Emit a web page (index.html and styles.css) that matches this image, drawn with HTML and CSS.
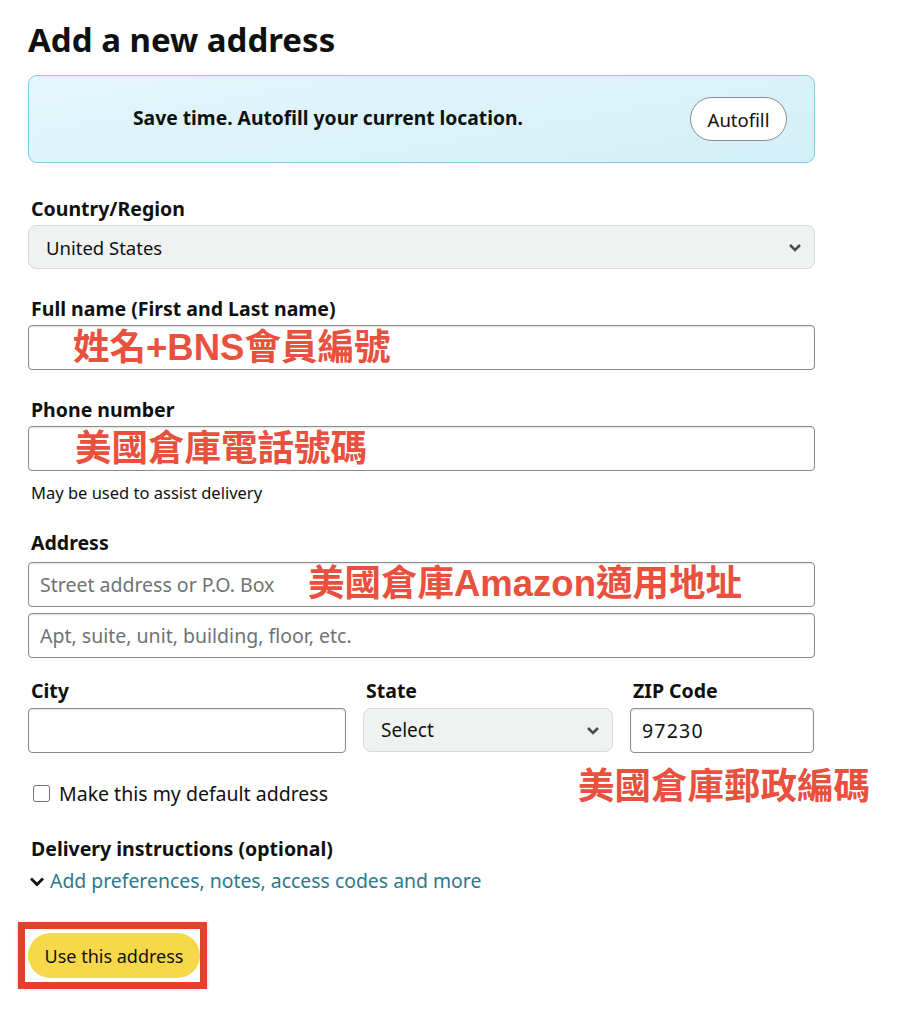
FILE: index.html
```html
<!DOCTYPE html>
<html>
<head>
<meta charset="UTF-8" />
<link rel="stylesheet" href="styles.css">
</head>
<body>
<div class="page">
  <h1 class="title">Add a new address</h1>

  <div class="autofill">
    <span class="autofill-text">Save time. Autofill your current location.</span>
    <span class="btn-autofill">Autofill</span>
  </div>

  <div class="field first">
    <div class="label">Country/Region</div>
    <div class="select">
      <span class="country">United States</span>
      <svg class="chev" width="14" height="9" viewBox="0 0 14 9"><polyline points="2,2 7,7 12,2" fill="none" stroke="#4a4d4d" stroke-width="2.6" /></svg>
    </div>
  </div>

  <div class="field">
    <div class="label">Full name (First and Last name)</div>
    <div class="input"><span class="note note-name">姓名+BNS會員編號</span></div>
  </div>

  <div class="field">
    <div class="label">Phone number</div>
    <div class="input"><span class="note note-phone">美國倉庫電話號碼</span></div>
    <div class="hint">May be used to assist delivery</div>
  </div>

  <div class="field addr">
    <div class="label">Address</div>
    <div class="input">
      <span class="placeholder street">Street address or P.O. Box</span>
      <span class="note note-addr">美國倉庫Amazon適用地址</span>
    </div>
    <div class="input second">
      <span class="placeholder">Apt, suite, unit, building, floor, etc.</span>
    </div>
  </div>

  <div class="row3">
    <div>
      <div class="label">City</div>
      <div class="input"></div>
    </div>
    <div>
      <div class="label">State</div>
      <div class="select">
        <span>Select</span>
        <svg class="chev" width="14" height="9" viewBox="0 0 14 9"><polyline points="2,2 7,7 12,2" fill="none" stroke="#4a4d4d" stroke-width="2.6" /></svg>
      </div>
    </div>
    <div>
      <div class="label">ZIP Code</div>
      <div class="input"><span class="value">97230</span></div>
    </div>
  </div>

  <div class="check-row">
    <label class="check"><span class="box"></span>Make this my default address</label>
    <span class="note note-zip">美國倉庫郵政編碼</span>
  </div>

  <div class="delivery">
    <div class="label">Delivery instructions (optional)</div>
    <div class="more">
      <svg width="16" height="11" viewBox="0 0 16 11"><polyline points="2,2.5 8,8.5 14,2.5" fill="none" stroke="#111" stroke-width="2.8" /></svg>
      <span>Add preferences, notes, access codes and more</span>
    </div>
  </div>

  <div class="mark">
    <span class="btn-use">Use this address</span>
  </div>
</div>
</body>
</html>
```

FILE: styles.css
```css
* {
  box-sizing: border-box;
}

body {
  margin: 0;
  background: #fff;
  color: #0f1111;
  font-family: "Noto Sans", "Liberation Sans", sans-serif;
  font-size: 19.5px;
}

div.page {
  width: 787px;
  margin-left: 28px;
}

h1.title {
  margin: 19px 0 0 0;
  font-size: 33px;
  line-height: 42px;
  font-weight: 700;
}

div.autofill {
  margin-top: 14px;
  height: 88px;
  display: flex;
  align-items: center;
  justify-content: space-between;
  padding: 0 27px 0 104px;
  border: 1px solid #7fcde0;
  border-radius: 9px;
  background: linear-gradient(170deg, #e4f7fc, #d3eff7);
}

span.autofill-text {
  font-weight: 700;
  font-size: 19.3px;
  margin-top: -4px;
}

span.btn-autofill {
  display: flex;
  align-items: center;
  justify-content: center;
  width: 97px;
  height: 44px;
  border: 1px solid #8a8d8f;
  border-radius: 22px;
  background: #fff;
  font-size: 18.5px;
}

div.label {
  font-weight: 700;
  line-height: 22px;
  height: 22px;
  margin-bottom: 5px;
  padding-left: 3px;
}

div.field {
  margin-top: 29px;
}

div.field.first {
  margin-top: 35px;
}

div.select {
  height: 44px;
  display: flex;
  align-items: center;
  justify-content: space-between;
  padding: 0 12px 0 17px;
  background: #f0f2f2;
  border: 1px solid #d5d9d9;
  border-radius: 8px;
  font-size: 19px;
}

span.country {
  font-size: 18.5px;
}

div.input {
  height: 45px;
  display: flex;
  align-items: center;
  padding: 0 11px;
  border: 1px solid #888c8c;
  border-radius: 4px;
  box-shadow: inset 0 1px 2px rgba(15, 17, 17, 0.12);
  background: #fff;
}

div.input.second {
  margin-top: 6px;
}

span.placeholder {
  color: #6f7373;
  white-space: nowrap;
}

span.placeholder.street {
  width: 268px;
}

span.value {
  color: #0f1111;
  letter-spacing: 1.2px;
}

span.note {
  color: #e9503e;
  font-family: "Liberation Sans", "Noto Sans CJK TC", sans-serif;
  font-weight: 700;
  font-size: 36.5px;
  line-height: 40px;
  white-space: nowrap;
}

span.note-name {
  margin-left: 33px;
}

span.note-phone {
  margin-left: 35px;
}

span.note-addr {
  margin-top: -2px;
}

div.hint {
  font-size: 16.5px;
  line-height: 20px;
  margin-top: 12px;
  padding-left: 3px;
}

div.field.addr {
  margin-top: 29px;
}

div.field.addr div.label {
  margin-bottom: 8px;
}

div.row3 {
  margin-top: 22px;
  display: grid;
  grid-template-columns: 318px 250px 184px;
  column-gap: 17px;
}

div.row3 div.label {
  margin-bottom: 6px;
}

div.check-row {
  display: flex;
  align-items: center;
  justify-content: space-between;
  width: 842px;
  margin-top: 14px;
  padding-left: 5px;
}

label.check {
  display: flex;
  align-items: center;
  margin-top: 12px;
}

span.box {
  width: 17px;
  height: 17px;
  border: 1px solid #6f7373;
  border-radius: 3px;
  margin-right: 9px;
  background: #fff;
}

div.delivery {
  margin-top: 31px;
}

div.delivery div.label {
  margin-bottom: 9px;
}

div.more {
  display: flex;
  align-items: center;
  gap: 5px;
  padding-left: 1px;
  color: #2b7a8c;
  font-size: 19.4px;
  line-height: 24px;
}

div.mark {
  display: inline-block;
  margin: 29px 0 0 -10px;
  padding: 4px 0 4px 3px;
  border: 7px solid #e5412a;
  box-shadow: 0 1px 3px rgba(0, 0, 0, 0.25);
}

span.btn-use {
  display: flex;
  align-items: center;
  justify-content: center;
  width: 172px;
  height: 45px;
  border-radius: 23px;
  background: #f7d84b;
  font-size: 18px;
}
```
